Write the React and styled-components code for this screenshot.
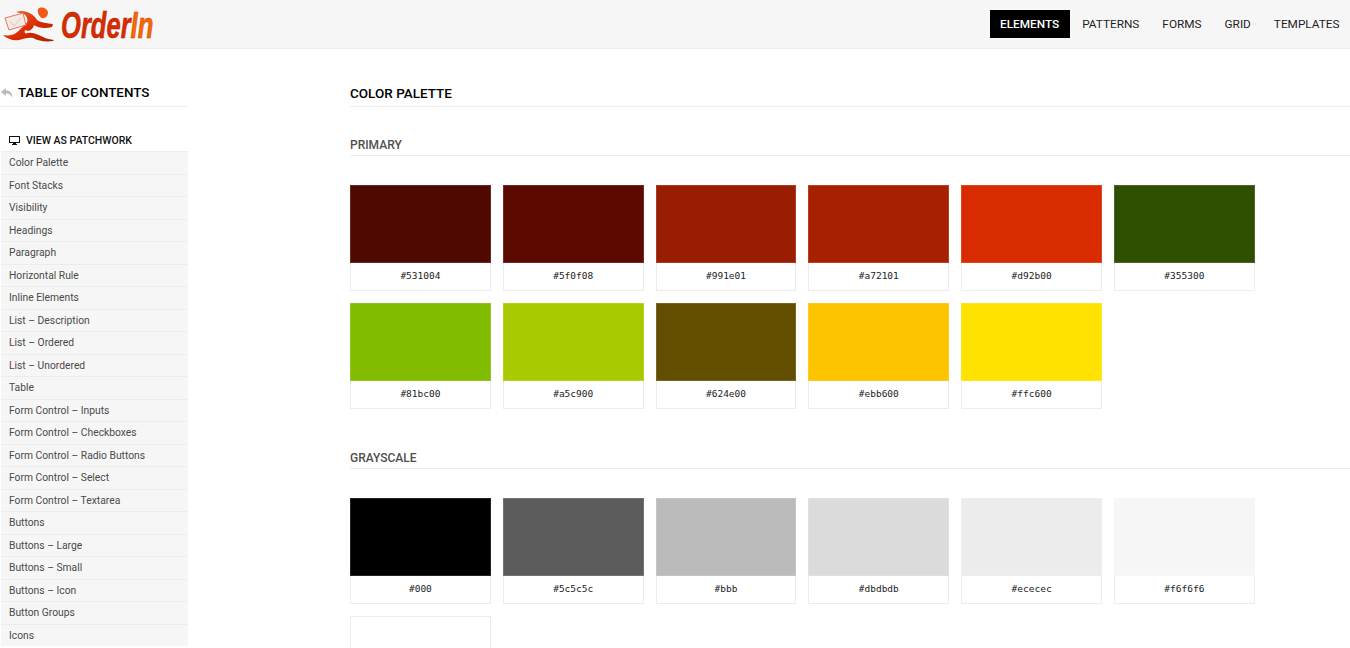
import React from "react";
import styled, { createGlobalStyle } from "styled-components";

const Global = createGlobalStyle`
  html, body { margin: 0; padding: 0; background: #fff; overflow: hidden; height: 648px; }
  body { font-family: Roboto, "Liberation Sans", sans-serif; color: #000; }
`;
const Header = styled.header`
  height: 48px; background: #f6f6f6; border-bottom: 1px solid #ececec;
  display: flex; justify-content: space-between; align-items: center;
`;
const Logo = styled.div`display: flex; align-items: center; height: 48px;`;
const Wordmark = styled.span`
  display: inline-block; font: italic 700 36px/36px "Liberation Sans", sans-serif;
  color: #d92b00; margin-left: 3px; margin-top: 4px;
  transform: scaleX(0.71); transform-origin: left center;
  -webkit-text-stroke: 0.5px #a72101;
`;
const WordAccent = styled.span`color: #f06a00; -webkit-text-stroke: 0.5px #d92b00;`;
const Nav = styled.nav`display: flex; align-items: center;`;
const NavItem = styled.a`
  height: 28px; line-height: 28px; padding: 0 10.5px; margin-left: 2px; font-size: 11.8px;
  font-weight: ${p => p.$active ? 500 : 400};
  background: ${p => p.$active ? "#000" : "transparent"};
  color: ${p => p.$active ? "#fff" : "#1e1e1e"};
`;
const Layout = styled.div`display: flex; align-items: flex-start; padding-top: 36px;`;
const Sidebar = styled.aside`width: 188px; flex: none;`;
const TocTitle = styled.h2`
  margin: 0; height: 21px; display: flex; align-items: flex-start; gap: 5px; font-size: 13.4px; font-weight: 500;
  border-bottom: 1px solid #ececec; padding-left: 1px; line-height: 16px;
  svg { margin-top: 3px; }
`;
const Patchwork = styled.div`
  margin-top: 22px; height: 22px; display: flex; align-items: center; gap: 6px; padding-left: 9px;
  font-size: 10.5px; font-weight: 500; color: #111;
`;
const TocList = styled.ul`margin: 0; padding: 0; list-style: none;`;
const TocItem = styled.li`
  height: 21.53px; line-height: 21px; padding-left: 8px; margin-left: 1px; font-size: 10.3px; color: #4a4a4a;
  background: #f6f6f6; border-top: 1px solid #ececec;
`;
const Main = styled.main`flex: 1; margin-left: 162px;`;
const PageTitle = styled.h1`
  margin: 0; height: 21px; font-size: 13.5px; line-height: 16px; font-weight: 500; border-bottom: 1px solid #ececec;
`;
const SectionTitle = styled.h3`
  margin: 0; height: 17px; font-size: 12px; line-height: 14px; font-weight: 500; color: #4f4f4f;
  border-bottom: 1px solid #ececec; margin-top: ${p => p.$top}px;
`;
const Grid = styled.div`
  display: grid; grid-template-columns: repeat(6, 140.8px); gap: 12px; margin-top: 29px;
`;
const Swatch = styled.div`border: 1px solid #ececec; height: 106px; box-sizing: border-box; background: #fff;`;
const Chip = styled.div`
  height: 78px; background: ${p => p.$c}; margin: -1px -1px 0;
  box-shadow: inset 0 0 0 1px rgba(255, 255, 255, 0.14);
`;
const Code = styled.div`
  height: 27px; text-align: center; font: 9.5px/25px "DejaVu Sans Mono", monospace; color: #222;
`;

const toc = ["Color Palette","Font Stacks","Visibility","Headings","Paragraph","Horizontal Rule","Inline Elements","List – Description","List – Ordered","List – Unordered","Table","Form Control – Inputs","Form Control – Checkboxes","Form Control – Radio Buttons","Form Control – Select","Form Control – Textarea","Buttons","Buttons – Large","Buttons – Small","Buttons – Icon","Button Groups","Icons"];
const primary = [["#531004","#4f0900"],["#5f0f08","#5c0900"],["#991e01","#991e01"],["#a72101","#a72101"],["#d92b00","#d92b00"],["#355300","#2f4f00"],["#81bc00","#81bc00"],["#a5c900","#a8ca00"],["#624e00","#624e00"],["#ebb600","#fdc400"],["#ffc600","#ffe200"]];
const gray = ["#000","#5c5c5c","#bbb","#dbdbdb","#ececec","#f6f6f6"];

function Runner() {
  return (
    <svg width="58" height="48" viewBox="0 0 58 48">
      <defs>
        <linearGradient id="runnerFill" x1="0" y1="0" x2="1" y2="1">
          <stop offset="0" stopColor="#f2703a" />
          <stop offset="0.55" stopColor="#d92b00" />
          <stop offset="1" stopColor="#a72101" />
        </linearGradient>
      </defs>
      <path d="M16 12C24 9 33 13 37 20C41 23 47 23 53 24L52 27C45 29 38 28 34 25C33 30 28 32 25 30C24 33 25 34 28 33C34 32 38 35 43 37C47 39 50 39 54 40L53 41C46 42 38 41 33 38C28 37 24 39 19 40C13 41 7 39 3 35C9 36 13 35 16 33C20 30 22 27 26 24C29 21 27 16 24 14C21 13 18 13 16 12Z" fill="url(#runnerFill)" />
      <path d="M5 18L23 13L26 25L9 30Z" fill="#f4e9e4" stroke="#e8775c" strokeWidth="1" />
      <path d="M10 21l4 5 7-8" fill="none" stroke="#d5cbc6" strokeWidth="1" />
      <path d="M38 9C41 6 47 8 48 12C48 16 45 19 42 18C39 17 37 12 38 9Z" fill="#ef5a18" />
    </svg>
  );
}
function Back() {
  return <svg width="12" height="10" viewBox="0 0 12 10"><path d="M5 0L0 4l5 4V5.500c3 0 5 1 6 4.500C12 5 9 2.500 5 2.500z" fill="#bbb"/></svg>;
}
function Monitor() {
  return <svg width="11" height="9" viewBox="0 0 11 9"><path d="M0 0h11v7H7v1h1v1H3V8h1V7H0zM1 1v5h9V1z" fill="#111"/></svg>;
}

export default function App() {
  return (
    <>
      <Global />
      <Header>
        <Logo><Runner /><Wordmark>Order<WordAccent>In</WordAccent></Wordmark></Logo>
        <Nav>
          <NavItem $active>ELEMENTS</NavItem>
          <NavItem>PATTERNS</NavItem>
          <NavItem>FORMS</NavItem>
          <NavItem>GRID</NavItem>
          <NavItem>TEMPLATES</NavItem>
        </Nav>
      </Header>
      <Layout>
        <Sidebar>
          <TocTitle><Back />TABLE OF CONTENTS</TocTitle>
          <Patchwork><Monitor />VIEW AS PATCHWORK</Patchwork>
          <TocList>{toc.map(t => <TocItem key={t}>{t}</TocItem>)}</TocList>
        </Sidebar>
        <Main>
          <PageTitle>COLOR PALETTE</PageTitle>
          <SectionTitle $top={31}>PRIMARY</SectionTitle>
          <Grid>
            {primary.map(([n, c]) => <Swatch key={n}><Chip $c={c} /><Code>{n}</Code></Swatch>)}
          </Grid>
          <SectionTitle $top={42}>GRAYSCALE</SectionTitle>
          <Grid>
            {gray.map(c => <Swatch key={c}><Chip $c={c} /><Code>{c}</Code></Swatch>)}
            <Swatch />
          </Grid>
        </Main>
      </Layout>
    </>
  );
}
